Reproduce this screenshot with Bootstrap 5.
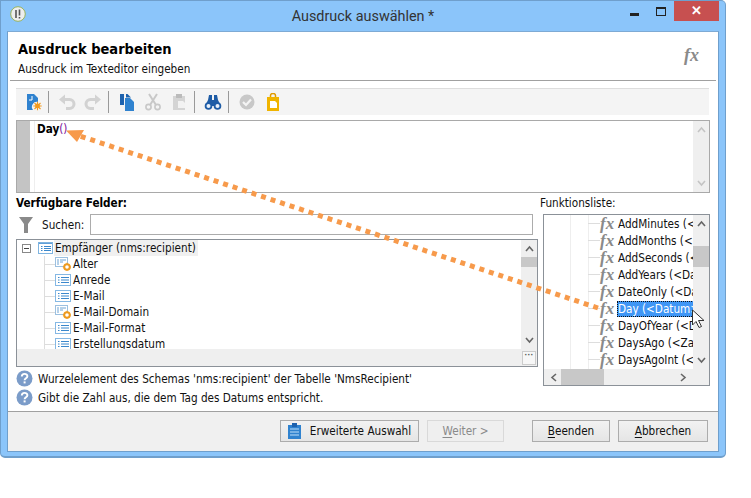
<!DOCTYPE html>
<html lang="de"><head><meta charset="utf-8"><title>Ausdruck auswählen</title>
<link href="https://cdn.jsdelivr.net/npm/bootstrap@5.3.0/dist/css/bootstrap.min.css" rel="stylesheet">
<style>
html,body{margin:0;height:498px;background:#fff;overflow:hidden}
body{font:11.65px/16px "DejaVu Sans Condensed","DejaVu Sans",sans-serif;color:#111;position:relative}
.win{width:726px;height:458px;background:#8bc5fa;border:1px solid #6f9fcc;border-width:1px 1px 2px 1px;border-radius:0 5px 5px 5px;padding:0 6px 4px 6px;box-sizing:border-box}
.ttl{height:30px;position:relative}
.ttl-text{font:14.4px/30px Roboto,sans-serif;color:#333;text-align:center;padding-top:1px}
.app{position:absolute;left:3px;top:5px}
.ctl{position:absolute;top:0}
.xbtn{left:667px;width:45px;height:20px;background:#c75050;color:#fff;font:bold 13px/20px "Liberation Sans",sans-serif;text-align:center}
.mn{left:623px;top:12px;width:9px;height:3px;background:#222}
.mx{left:649px;top:6px;width:10px;height:9px;border:1px solid #222;border-top-width:2px}
.inner{height:421px;background:#fff;border:1px solid #6f9fcc;border-top:1px solid #7eaad4;display:flex;flex-direction:column;position:relative}
.hdr{height:49px;margin:0 2px;border-bottom:1px solid #a0a0a0;padding:8px 8px 0 8px;flex:none}
.htitle{font-weight:700;font-size:14.5px;line-height:18px;color:#000}
.hsub{line-height:16px;margin-top:3px;color:#111}
.fxbig{font:italic 700 18px/20px "Liberation Serif",serif;color:#8a8a8a;position:absolute;right:19px;top:13px}
.bodyx{padding:7px 7px 0 8px;flex:1 1 auto;min-height:0}
.tbar{width:693px;height:27px;background:#f4f4f4;border-top:1px solid #ddd;display:flex;align-items:center;padding-left:8px}
.tbar svg{flex:none;width:18px;height:18px;margin-right:8px}
.tsep{width:1px;height:22px;background:#999;margin:0 9px 0 -2px;flex:none}
.edt{width:694px;height:73px;margin-top:5px;border:1px solid #a9a9a9;display:flex;background:#fff}
.gut{width:13px;background:#c4c4c4;flex:none}
.edt-code{flex:1;margin-left:4px;border-left:1px solid #eee;padding:1px 0 0 2px;font-weight:700;color:#000;line-height:15px}
.edt-code i{font-style:normal;color:#7a0f9a;font-weight:400}
.vsb{width:16px;background:#efefef;flex:none;display:flex;flex-direction:column;align-items:center;justify-content:space-between;position:relative}
.vsb svg{width:9px;height:7px;margin:5px 0}
.lbl{height:21px;line-height:20px}
.lbl-b{font-weight:700;color:#000}
.lbl-r{margin-left:-3px}
.colL{width:522px;flex:none}
.colR{width:167px;flex:none;margin-left:5px}
.srch{height:21px;display:flex;align-items:center}
.srch svg{margin:0 9px 0 3px}
.srch span{width:48px;flex:none}
.srch div{width:443px;height:21px;border:1px solid #acacac;background:#fff}
.tree{height:128px;margin-top:4px;border:1px solid #8b9198;display:flex;flex-wrap:wrap;position:relative;background:#efefef}
.tree-main{width:504px;height:109px;background:#fff;overflow:hidden;position:relative}
.trow{height:16px;display:flex;align-items:center;white-space:nowrap;padding-left:38px;position:relative;line-height:16px}
.trow svg{margin-right:2px;flex:none}
.trow.root{padding-left:5px}
.trow.root svg{margin-right:1px}
.rootl{background:#f0f0f0;padding:0 2px 0 1px}
.trow:not(.root)::before{content:"";position:absolute;left:27px;width:11px;height:1px;background:#ddd;top:8px}
.tvl{position:absolute;left:27px;top:16px;width:1px;height:93px;background:#ddd}
.mbox{width:9px;height:9px;border:1px solid #888;background:#fff;margin-right:7px;position:relative;flex:none;box-sizing:border-box}
.mbox::after{content:"";position:absolute;left:1px;top:3px;width:5px;height:1px;background:#444}
.tvsb{height:109px}
.hfill{width:504px;height:17px}
.corner{width:16px;height:17px;display:flex;align-items:center;justify-content:center}
.corner b{display:block;width:14px;height:14px;background:#f7f7f7;border:1px solid #ccc;color:#555;font:700 9px/7px "Liberation Sans",sans-serif;text-align:center}
.thumb{position:absolute;left:0;right:0;background:#c8c8c8}
.t1{top:17px;height:10px}.t2{top:31px;height:21px}
.flist{height:172px;border:1px solid #8b9198;display:flex;flex-wrap:wrap;background:#efefef;width:167px;position:relative}
.fmain{width:149px;height:154px;background:#fff;overflow:hidden;position:relative}
.frow{height:17px;display:flex;align-items:center;white-space:nowrap;padding-left:56px;position:relative}
.frow::before{content:"";position:absolute;left:44px;width:12px;height:1px;background:#ddd;top:8px}
.fx{font:italic 700 17px/16px "Liberation Serif",serif;color:#8a8a8a;width:17px;flex:none;position:relative;z-index:1}
.frow>span:last-child{padding:0 1px}
.sel{background:#3f96f5;color:#fff;outline:1px dotted #111;outline-offset:-1px;flex:1 1 auto;line-height:16px;height:16px}
.g1,.g2{position:absolute;top:0;bottom:0;width:1px;background:#eee}.g1{left:26px}.g2{left:44px}
.fvsb{height:154px;width:16px}
.fh{width:149px;height:16px;position:relative;display:flex;align-items:center;justify-content:space-between;padding:0 6px}
.fh svg{width:7px;height:9px;position:relative}
.fthumb{position:absolute;left:17px;width:43px;top:0;bottom:0;background:#c8c8c8}
.cornerf{width:16px;height:16px}
.info{height:19px;display:flex;align-items:center}
.info svg{margin-right:5px;flex:none}
.info1{margin-top:2px}
.ftr{height:40px;background:#f0f0f0;border-top:1px solid #a0a0a0;padding:8px 10px 0 0;position:absolute;left:0;right:0;bottom:0;display:flex;justify-content:flex-end}
.wbtn{height:22px;border:1px solid #acacac;background:linear-gradient(#f2f2f2,#e5e5e5);border-radius:0;padding:0;font-size:11.65px;line-height:20px;color:#111;display:flex;align-items:center;justify-content:center}
.wbtn u{text-underline-offset:2px}
.b1{width:139px;margin-right:8px}.b1 svg{margin-right:9px}
.wbtn.b2:disabled{width:77px;margin-right:28px;color:#8a8a8a;background:#efefef;border-color:#d9d9d9;opacity:1}
.b3{width:78px;margin-right:8px}.b4{width:90px}
.over{position:absolute;left:0;top:0;pointer-events:none}
</style></head><body>
<svg width="0" height="0" class="position-absolute">
<defs>
<symbol id="list" viewBox="0 0 16 12"><rect x=".5" y=".5" width="15" height="11" fill="#fff" stroke="#85b8e4"/><path d="M3 3.500h1.500M3 6h1.500M3 8.500h1.500M6 3.500h8M6 6h8M6 8.500h8" stroke="#3b88cc"/></symbol>
<symbol id="listr" viewBox="0 0 15 12"><rect x=".5" y=".5" width="14" height="11" fill="#fff" stroke="#7fb4e0"/><rect x="1" y="1" width="13" height="1" fill="#5f9fd8"/><path d="M3 4.500h1.500M3 6.500h1.500M3 8.500h1.500M6 4.500h7M6 6.500h7M6 8.500h7" stroke="#3b88cc"/></symbol>
<symbol id="listg" viewBox="0 0 16 14"><rect x=".5" y=".5" width="12" height="9" fill="#fff" stroke="#9cc0e0"/><path d="M2 3h2M2 5h2M2 7h2M5 3h6M5 5h3" stroke="#6ea4d4"/><circle cx="12" cy="10" r="2.800" fill="#fff" stroke="#ee9a1e" stroke-width="2"/><path d="M12 5.800v1M12 13.200v1M7.800 10h1M15.200 10h1" stroke="#ee9a1e" stroke-width="1.200"/></symbol>
<symbol id="q" viewBox="0 0 17 17"><circle cx="8.500" cy="8.500" r="8" fill="#7b9cc9"/><path d="M5.800 6.500c0-3.400 5.600-3.400 5.600-.2 0 2-2.800 2-2.800 4" fill="none" stroke="#fff" stroke-width="1.900"/><rect x="7.600" y="11.400" width="2" height="2" fill="#fff"/></symbol>
<symbol id="up" viewBox="0 0 9 7"><path d="M1 6l3.500-4L8 6" fill="none" stroke="#666" stroke-width="1.600"/></symbol>
<symbol id="dn" viewBox="0 0 9 7"><path d="M1 1l3.500 4L8 1" fill="none" stroke="#666" stroke-width="1.600"/></symbol>
<symbol id="upg" viewBox="0 0 9 7"><path d="M1 6l3.500-4L8 6" fill="none" stroke="#c4c4c4" stroke-width="1.600"/></symbol>
<symbol id="dng" viewBox="0 0 9 7"><path d="M1 1l3.500 4L8 1" fill="none" stroke="#c4c4c4" stroke-width="1.600"/></symbol>
<symbol id="undo" viewBox="0 0 18 18"><path d="M6 6.500h5.500a4.500 4.500 0 0 1 0 9H8" fill="none" stroke="#d2d2d2" stroke-width="3"/><path d="M1 6.500L7 1.500v10z" fill="#d2d2d2"/></symbol>
</defs></svg>

<div class="win">
 <div class="ttl">
  <svg class="app" width="16" height="16" viewBox="0 0 16 16"><circle cx="8" cy="8" r="7.300" fill="#eee" stroke="#9ab35a"/><path d="M6 4v8M9.500 3.500v6M9.500 11v1.500" stroke="#555" stroke-width="1.600"/></svg>
  <div class="ttl-text">Ausdruck auswählen *</div>
  <div class="ctl mn"></div><div class="ctl mx"></div><div class="ctl xbtn">✕</div>
 </div>
 <div class="inner">
  <div class="hdr">
   <div class="htitle">Ausdruck bearbeiten</div>
   <div class="hsub">Ausdruck im Texteditor eingeben</div>
   <div class="fxbig">fx</div>
  </div>
  <div class="bodyx">
   <div class="tbar">
    <svg viewBox="0 0 18 18"><path d="M3 1h7l4 4v4a5 5 0 0 0-5 8H3z" fill="#2f82cf"/><path d="M8 3v4H5" fill="none" stroke="#fff"/><circle cx="13.500" cy="13" r="2.400" fill="#f39a1c"/><path d="M13.500 8.800v8.400M9.300 13h8.400M10.500 10l6 6M16.500 10l-6 6" stroke="#f39a1c" stroke-width="1.100"/></svg>
    <div class="tsep"></div>
    <svg viewBox="0 0 18 18"><use href="#undo"/></svg>
    <svg viewBox="0 0 18 18" style="transform:scaleX(-1)"><use href="#undo"/></svg>
    <div class="tsep"></div>
    <svg viewBox="0 0 18 18"><path d="M2 1h4v11H2z" fill="#1e62ae"/><path d="M7 5h5l4 4v9H7z" fill="#2f82cf"/><path d="M8 1h1.500L13 4.500H8z" fill="#1e62ae"/></svg>
    <svg viewBox="0 0 18 18"><path d="M5 1l7 11M13 1L6 12" stroke="#c8c8c8" stroke-width="2"/><circle cx="4.500" cy="14" r="2.600" fill="none" stroke="#c8c8c8" stroke-width="1.600"/><circle cx="13.500" cy="14" r="2.600" fill="none" stroke="#c8c8c8" stroke-width="1.600"/></svg>
    <svg viewBox="0 0 18 18"><path d="M3 3h12v14H3z" fill="#d4d4d4"/><path d="M6 1h6v4H6z" fill="#bbb"/><path d="M8 8h5l2 2v5H8z" fill="#f2f2f2"/></svg>
    <div class="tsep"></div>
    <svg viewBox="0 0 18 18"><path d="M5 2h3v5h2V2h3l1 5 3 6H1l3-6z" fill="#1e5ca6"/><circle cx="4.500" cy="13" r="3.800" fill="#1e5ca6"/><circle cx="13.500" cy="13" r="3.800" fill="#1e5ca6"/><circle cx="4.500" cy="13" r="2" fill="#e8f0fa"/><circle cx="13.500" cy="13" r="2" fill="#e8f0fa"/></svg>
    <div class="tsep"></div>
    <svg viewBox="0 0 18 18"><circle cx="9" cy="9" r="7.500" fill="#c8c8c8"/><path d="M5 9l3 3 5-5.500" fill="none" stroke="#f4f4f4" stroke-width="2.200"/></svg>
    <svg viewBox="0 0 18 18"><path d="M3 4h12v14H3z" fill="#f0b400"/><path d="M6.500 4V2.500a2.500 2 0 0 1 5 0V4" fill="none" stroke="#e09a00" stroke-width="1.500"/><path d="M6 8h5l2 2v5H6z" fill="#fff"/></svg>
   </div>
   <div class="edt">
    <div class="gut"></div>
    <div class="edt-code">Day<i>()</i></div>
    <div class="vsb"><svg><use href="#upg"/></svg><svg><use href="#dng"/></svg></div>
   </div>
   <div class="d-flex">
    <div class="colL">
     <div class="lbl lbl-b">Verfügbare Felder:</div>
     <div class="srch">
      <svg width="14" height="16" viewBox="0 0 14 16"><path d="M0 0h14L9 7v9H5V7z" fill="#8a8a8a"/></svg>
      <span>Suchen:</span><div></div>
     </div>
     <div class="tree">
      <div class="tree-main">
       <div class="tvl"></div>
       <div class="trow root"><span class="mbox"></span><svg width="15" height="12"><use href="#listr"/></svg><span class="rootl">Empfänger (nms:recipient)</span></div>
       <div class="trow"><svg width="16" height="14"><use href="#listg"/></svg><span>Alter</span></div>
       <div class="trow"><svg width="16" height="12"><use href="#list"/></svg><span>Anrede</span></div>
       <div class="trow"><svg width="16" height="12"><use href="#list"/></svg><span>E-Mail</span></div>
       <div class="trow"><svg width="16" height="14"><use href="#listg"/></svg><span>E-Mail-Domain</span></div>
       <div class="trow"><svg width="16" height="12"><use href="#list"/></svg><span>E-Mail-Format</span></div>
       <div class="trow"><svg width="16" height="12"><use href="#list"/></svg><span>Erstellungsdatum</span></div>
      </div>
      <div class="vsb tvsb"><svg><use href="#up"/></svg><div class="thumb t1"></div><svg><use href="#dn"/></svg></div>
      <div class="hfill"></div>
      <div class="corner"><b>···</b></div>
     </div>
     <div class="info info1"><svg width="17" height="17"><use href="#q"/></svg><span>Wurzelelement des Schemas 'nms:recipient' der Tabelle 'NmsRecipient'</span></div>
     <div class="info"><svg width="17" height="17"><use href="#q"/></svg><span>Gibt die Zahl aus, die dem Tag des Datums entspricht.</span></div>
    </div>
    <div class="colR">
     <div class="lbl lbl-r">Funktionsliste:</div>
     <div class="flist">
      <div class="fmain">
       <div class="g1"></div><div class="g2"></div>
       <div class="frow"><span class="fx">fx</span><span>AddMinutes (&lt;Datum&gt;)</span></div>
       <div class="frow"><span class="fx">fx</span><span>AddMonths (&lt;Datum&gt;)</span></div>
       <div class="frow"><span class="fx">fx</span><span>AddSeconds (&lt;Datum&gt;)</span></div>
       <div class="frow"><span class="fx">fx</span><span>AddYears (&lt;Datum&gt;)</span></div>
       <div class="frow"><span class="fx">fx</span><span>DateOnly (&lt;Datum&gt;)</span></div>
       <div class="frow"><span class="fx">fx</span><span class="sel">Day (&lt;Datum&gt;)</span></div>
       <div class="frow"><span class="fx">fx</span><span>DayOfYear (&lt;Datum&gt;)</span></div>
       <div class="frow"><span class="fx">fx</span><span>DaysAgo (&lt;Zahl&gt;)</span></div>
       <div class="frow"><span class="fx">fx</span><span>DaysAgoInt (&lt;Zahl&gt;)</span></div>
      </div>
      <div class="vsb fvsb"><svg><use href="#up"/></svg><div class="thumb t2"></div><svg><use href="#dn"/></svg></div>
      <div class="fh"><div class="fthumb"></div><svg viewBox="0 0 7 9"><path d="M6 1L2 4.500 6 8" fill="none" stroke="#666" stroke-width="1.600"/></svg><svg viewBox="0 0 7 9"><path d="M1 1l4 3.500L1 8" fill="none" stroke="#666" stroke-width="1.600"/></svg></div>
      <div class="cornerf"></div>
     </div>
    </div>
   </div>
  </div>
  <div class="ftr">
   <button class="btn wbtn b1" type="button"><svg width="13" height="16" viewBox="0 0 13 16"><path d="M0 2h13v14H0z" fill="#2f82cf"/><path d="M4 0h5v4H4z" fill="#1e62ae"/><path d="M2 6h9M2 9h9M2 12h9" stroke="#bfe0fa"/></svg>Erweiterte Auswahl</button>
   <button class="btn wbtn b2" type="button" disabled><span><u>W</u>eiter &gt;</span></button>
   <button class="btn wbtn b3" type="button"><span><u>B</u>eenden</span></button>
   <button class="btn wbtn b4" type="button"><span><u>A</u>bbrechen</span></button>
  </div>
 </div>
</div>
<svg class="over" width="751" height="498" viewBox="0 0 751 498">
 <path d="M598 308L80 136" stroke="#f79a4b" stroke-width="5" stroke-dasharray="5 5" fill="none"/>
 <path d="M66 130.500L84 130 77 142z" fill="#f79a4b"/>
 <path d="M692.500 310v15l3.500-3.500 3 6 2.500-1-3-6h5.500z" fill="#fff" stroke="#333" stroke-width="1"/>
</svg>
</body></html>
